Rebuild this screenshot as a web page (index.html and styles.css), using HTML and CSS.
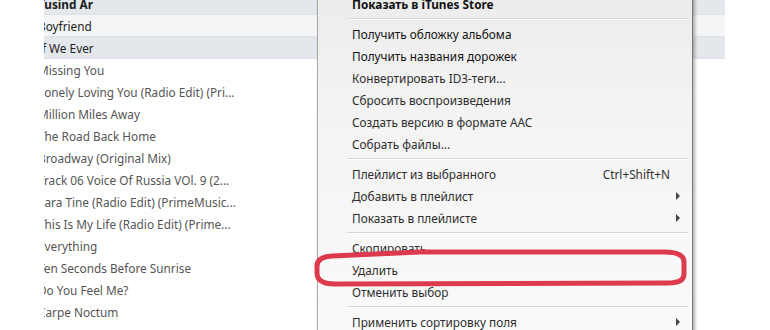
FILE: index.html
```html
<!DOCTYPE html>
<html lang="ru">
<head>
  <meta charset="UTF-8">
  <title>iTunes — контекстное меню</title>
  <link rel="stylesheet" href="styles.css">
</head>
<body>
  <div class="page">
    <!-- пустое поле слева -->
    <div class="gutter"></div>

    <!-- список композиций -->
    <div class="tracks">
      <div class="track sel dark bold"><span>Tusind Ar</span></div>
      <div class="track sel"><span>Boyfriend</span></div>
      <div class="track sel dark"><span>If We Ever</span></div>
      <div class="track"><span>Missing You</span></div>
      <div class="track"><span>Lonely Loving You (Radio Edit) (Pri...</span></div>
      <div class="track"><span>Million Miles Away</span></div>
      <div class="track"><span>The Road Back Home</span></div>
      <div class="track"><span>Broadway (Original Mix)</span></div>
      <div class="track"><span>Track 06 Voice Of Russia VOl. 9 (2...</span></div>
      <div class="track"><span>Sara Tine (Radio Edit) (PrimeMusic...</span></div>
      <div class="track"><span>This Is My Life (Radio Edit) (Prime...</span></div>
      <div class="track"><span>Everything</span></div>
      <div class="track"><span>Ten Seconds Before Sunrise</span></div>
      <div class="track"><span>Do You Feel Me?</span></div>
      <div class="track"><span>Carpe Noctum</span></div>
    </div>

    <!-- контекстное меню -->
    <div class="menu">
      <div class="item default"><span>Показать в iTunes Store</span></div>
      <div class="sep"></div>
      <div class="item strong"><span>Получить обложку альбома</span></div>
      <div class="item strong"><span>Получить названия дорожек</span></div>
      <div class="item"><span>Конвертировать ID3-теги...</span></div>
      <div class="item"><span>Сбросить воспроизведения</span></div>
      <div class="item"><span>Создать версию в формате AAC</span></div>
      <div class="item"><span>Собрать файлы...</span></div>
      <div class="sep"></div>
      <div class="item"><span>Плейлист из выбранного</span><span class="key">Ctrl+Shift+N</span></div>
      <div class="item"><span>Добавить в плейлист</span><i class="arrow"></i></div>
      <div class="item"><span>Показать в плейлисте</span><i class="arrow"></i></div>
      <div class="sep"></div>
      <div class="item"><span>Скопировать</span></div>
      <div class="item"><span>Удалить</span></div>
      <div class="item"><span>Отменить выбор</span></div>
      <div class="sep"></div>
      <div class="item"><span>Применить сортировку поля</span><i class="arrow"></i></div>
    </div>

    <!-- красная обводка вокруг "Удалить" -->
    <svg class="mark" viewBox="0 0 378 44" width="378" height="44">
      <path d="M20 10 L108 6 L353 6 Q372 6 372 16 L372 28 Q372 37 356 37 L23 38 Q5 38 5 27 L5 20 Q5 11 20 10 Z"
            fill="none" stroke="#de3a4e" stroke-width="5" stroke-linejoin="round"/>
    </svg>
  </div>
</body>
</html>
```

FILE: styles.css
```css
/* Сброс */
* {
  margin: 0;
  padding: 0;
  box-sizing: border-box;
}
body {
  font-family: 'Noto Sans', 'Open Sans', sans-serif;
  font-size: 11.8px;
  background: #fff;
  color: #333;
}
.page {
  position: relative;
  display: flex;
  width: 770px;
  height: 330px;
  overflow: hidden;
}
.gutter {
  width: 44px;
  flex: none;
}
/* Список */
.tracks {
  width: 681px;
  flex: none;
  margin-top: -7px;
  display: flex;
  flex-direction: column;
}
.track {
  height: 22px;
  line-height: 22px;
  overflow: hidden;
  white-space: nowrap;
  color: #555;
  border-bottom: 1px solid #fcfcfc;
}
.track span {
  display: block;
  margin-left: -6px;
}
.track.sel {
  background: #f3f5f7;
  color: #1c1c1c;
  border-bottom: 1px solid #dde2e7;
}
.track.sel.dark {
  background: #e4e8ed;
}
.track.bold {
  font-weight: 700;
}
/* Меню */
.menu {
  position: absolute;
  left: 317px;
  top: -11px;
  width: 376px;
  padding: 3px 0;
  background: linear-gradient(#ececec, #f4f4f4 40%, #fafafa);
  border: 1px solid #a6a6a6;
  border-right-color: #7a7a7a;
  box-shadow: 2px 2px 3px rgba(0, 0, 0, 0.3);
}
.item {
  height: 22px;
  line-height: 22px;
  padding: 0 12px 0 34px;
  display: flex;
  justify-content: space-between;
  align-items: center;
  color: #2e2e2e;
  white-space: nowrap;
}
.item.default {
  font-weight: 700;
  color: #111;
}
.item.strong {
  color: #111;
}
.item .key {
  margin-right: 10px;
  color: #333;
}
.arrow {
  width: 0;
  height: 0;
  border-top: 4px solid transparent;
  border-bottom: 4px solid transparent;
  border-left: 4px solid #444;
}
.sep {
  height: 8px;
  margin-left: 29px;
  margin-right: 4px;
  display: flex;
  flex-direction: column;
  justify-content: center;
}
.sep::before {
  content: '';
  height: 1px;
  background: #d6d6d6;
  border-bottom: 1px solid #fff;
  box-sizing: content-box;
}
/* Обводка */
.mark {
  position: absolute;
  left: 312px;
  top: 246px;
}
```
